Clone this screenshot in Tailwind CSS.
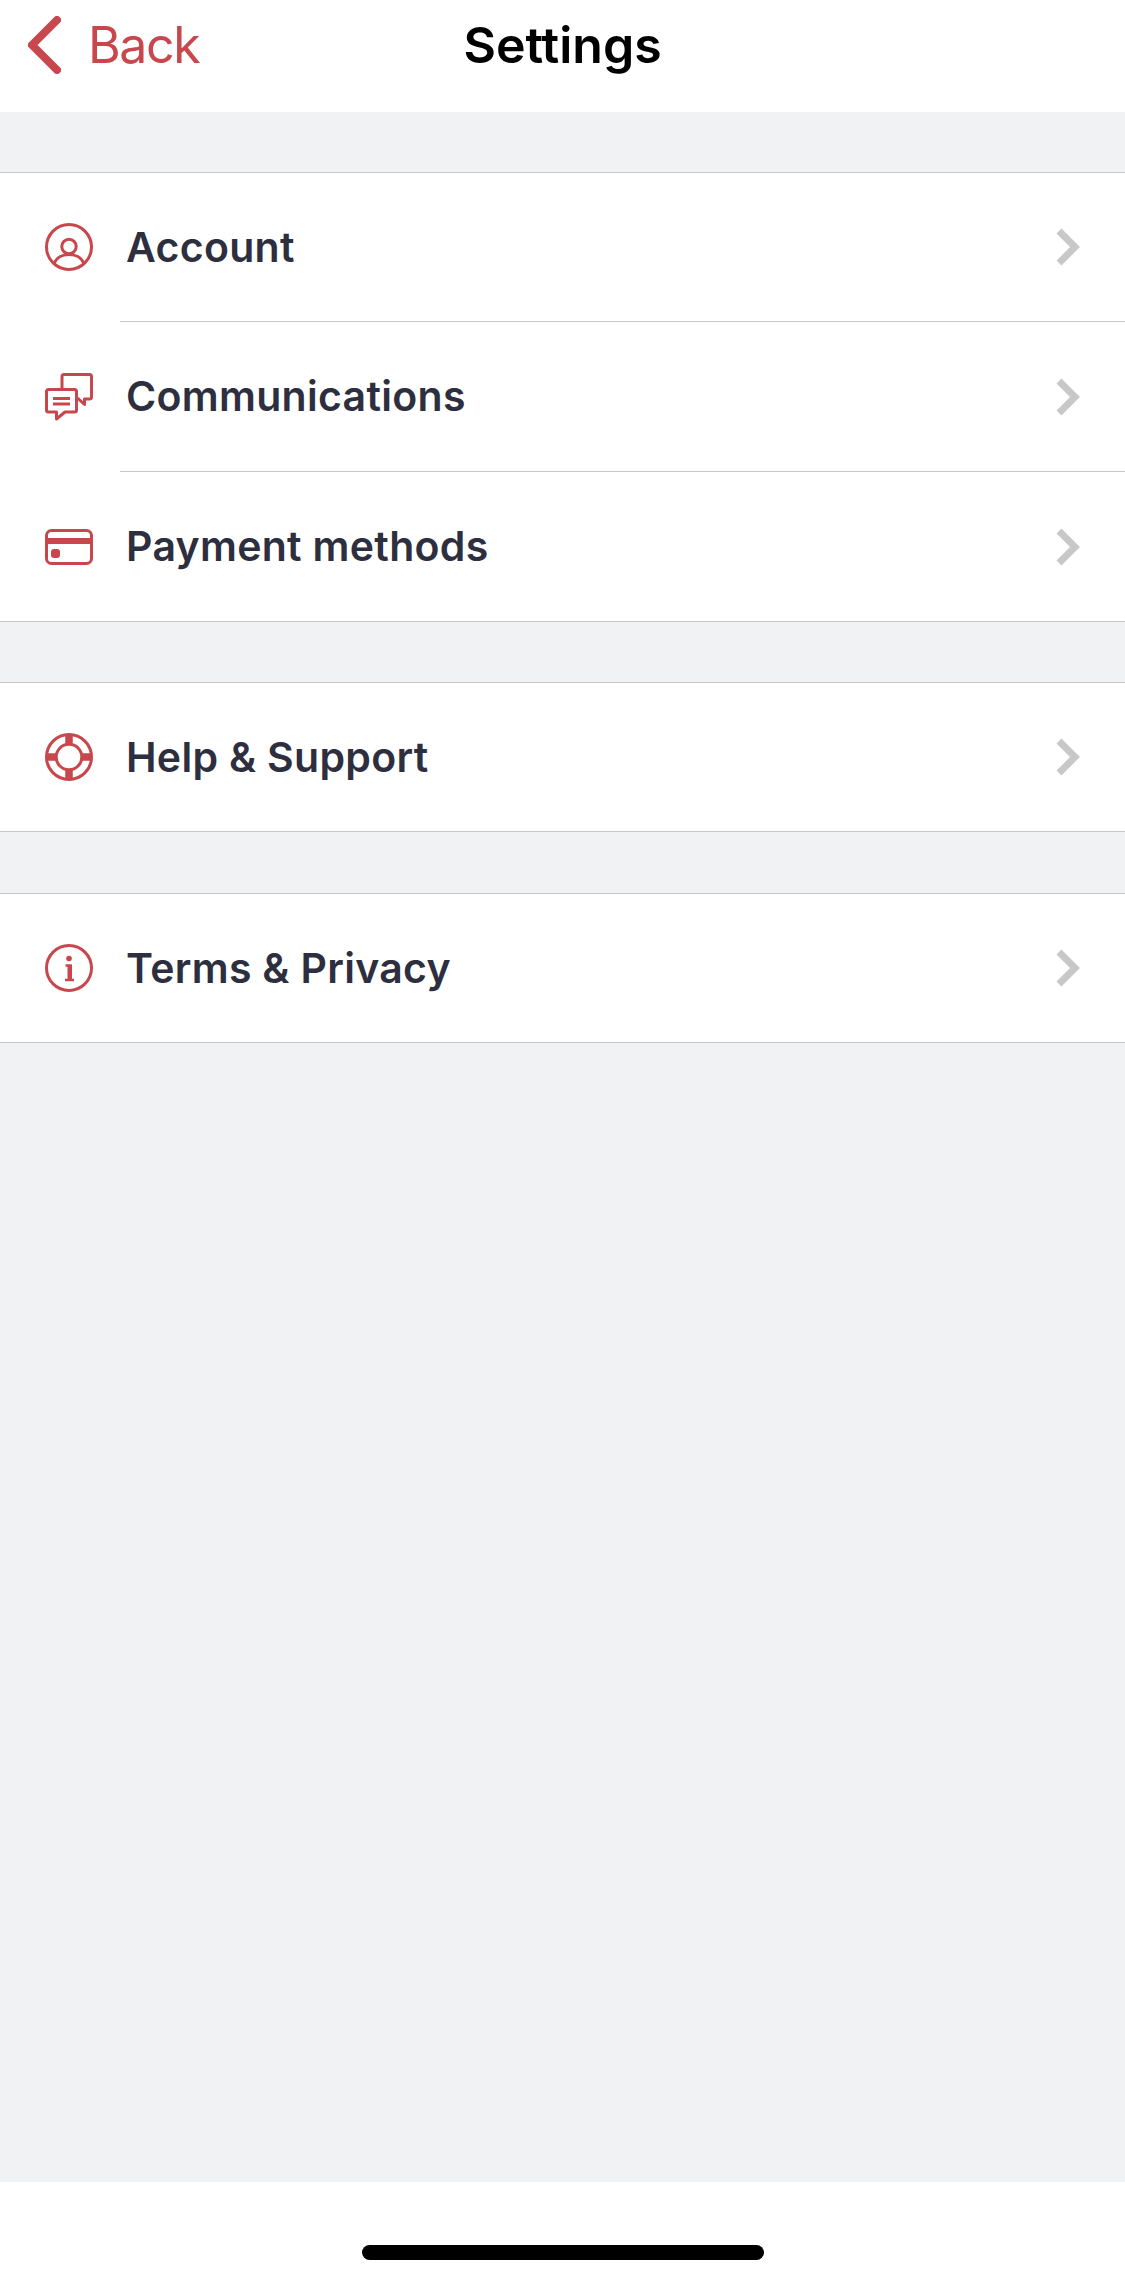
<!DOCTYPE html>
<html lang="en">

<head>
  <meta charset="UTF-8" />
  <meta name="viewport" content="width=device-width, initial-scale=1.0" />
  <title>Settings</title>
  <script src="https://cdn.jsdelivr.net/npm/@tailwindcss/browser@4"></script>
</head>

<body class="bg-[#f1f2f4] font-[Inter,sans-serif]">
  <div class="flex flex-col h-[2284px] w-[1125px] overflow-hidden">

    <!-- Navbar -->
    <header class="grid grid-cols-[1fr_auto_1fr] items-center h-[112px] pb-[22px] bg-white">
      <div class="flex items-center pl-[28px] gap-[27px] text-[#c8474d]">
        <svg width="33" height="58" viewBox="0 0 33 58" fill="none" stroke="currentColor" stroke-width="8" stroke-linecap="round" stroke-linejoin="round">
          <path d="M29 4 L4 29 L29 54" />
        </svg>
        <span class="text-[50px] leading-none tracking-[-1.4px]">Back</span>
      </div>
      <h1 class="text-[50px] leading-none font-semibold text-black">Settings</h1>
      <div></div>
    </header>

    <div class="h-[60px] shrink-0"></div>

    <!-- First group -->
    <section class="bg-white border-y border-[#c6c6c8]">
      <div class="flex items-center h-[148px] pl-[45px] pr-[44px]">
        <svg class="w-[48px] h-[48px] mr-[33px]" viewBox="0 0 48 48" fill="none" stroke="#c8474d" stroke-width="3">
          <circle cx="24" cy="24" r="22.5" />
          <circle cx="24" cy="23.5" r="7.2" />
          <path d="M9 41c2-6 8-9.5 15-9.5s13 3.5 15 9.5" />
        </svg>
        <span class="flex-1 text-[41px] leading-none font-semibold tracking-[0.3px] text-[#2d2f3e]">Account</span>
        <svg class="w-[25px] h-[38px]" viewBox="0 0 25 38" fill="none" stroke="#c8c8c8" stroke-width="7">
          <path d="M3 3 L19 19 L3 35" />
        </svg>
      </div>
      <div class="ml-[120px] h-px bg-[#c6c6c8]"></div>
      <div class="flex items-center h-[149px] pl-[45px] pr-[44px]">
        <svg class="w-[48px] h-[48px] mr-[33px]" viewBox="0 0 48 48" fill="none" stroke="#c8474d" stroke-width="3" stroke-linejoin="round">
          <path d="M17 15V3.5a2 2 0 0 1 2-2h25.5a2 2 0 0 1 2 2V24a2 2 0 0 1-2 2H39.5v5.5L32.5 25" />
          <path d="M3.5 16.5h26a2 2 0 0 1 2 2V37a2 2 0 0 1-2 2H20l-8.5 7V39h-8a2 2 0 0 1-2-2V18.5a2 2 0 0 1 2-2z" />
          <path d="M8 25.5h17M8 31h17" />
        </svg>
        <span class="flex-1 text-[41px] leading-none font-semibold tracking-[0.3px] text-[#2d2f3e]">Communications</span>
        <svg class="w-[25px] h-[38px]" viewBox="0 0 25 38" fill="none" stroke="#c8c8c8" stroke-width="7">
          <path d="M3 3 L19 19 L3 35" />
        </svg>
      </div>
      <div class="ml-[120px] h-px bg-[#c6c6c8]"></div>
      <div class="flex items-center h-[149px] pl-[45px] pr-[44px]">
        <svg class="w-[48px] h-[48px] mr-[33px]" viewBox="0 0 48 48" fill="none" stroke="#c8474d" stroke-width="3">
          <rect x="1.5" y="7.5" width="45" height="33" rx="5" />
          <rect x="1.5" y="15" width="45" height="6" fill="#c8474d" stroke="none" />
          <rect x="6" y="26" width="9" height="9" rx="3" fill="#c8474d" stroke="none" />
        </svg>
        <span class="flex-1 text-[41px] leading-none font-semibold tracking-[0.3px] text-[#2d2f3e]">Payment methods</span>
        <svg class="w-[25px] h-[38px]" viewBox="0 0 25 38" fill="none" stroke="#c8c8c8" stroke-width="7">
          <path d="M3 3 L19 19 L3 35" />
        </svg>
      </div>
    </section>

    <div class="h-[60px] shrink-0"></div>

    <!-- Help -->
    <section class="bg-white border-y border-[#c6c6c8]">
      <div class="flex items-center h-[148px] pl-[45px] pr-[44px]">
        <svg class="w-[48px] h-[48px] mr-[33px]" viewBox="0 0 48 48" fill="none" stroke="#c8474d" stroke-width="3">
          <circle cx="24" cy="24" r="22.5" />
          <circle cx="24" cy="24" r="12.8" />
          <path d="M24 2v10M24 36v10M2 24h10M36 24h10" stroke-width="7.5" />
        </svg>
        <span class="flex-1 text-[41px] leading-none font-semibold tracking-[0.3px] text-[#2d2f3e]">Help &amp; Support</span>
        <svg class="w-[25px] h-[38px]" viewBox="0 0 25 38" fill="none" stroke="#c8c8c8" stroke-width="7">
          <path d="M3 3 L19 19 L3 35" />
        </svg>
      </div>
    </section>

    <div class="h-[61px] shrink-0"></div>

    <!-- Terms -->
    <section class="bg-white border-y border-[#c6c6c8]">
      <div class="flex items-center h-[148px] pl-[45px] pr-[44px]">
        <svg class="w-[48px] h-[48px] mr-[33px]" viewBox="0 0 48 48" fill="none" stroke="#c8474d" stroke-width="3">
          <circle cx="24" cy="24" r="22.5" />
          <circle cx="24" cy="14.5" r="2.8" fill="#c8474d" stroke="none" />
          <path d="M20.5 21.5H25.5V35M20 36h9" stroke-width="2.6" />
          <rect x="22.5" y="21" width="4.5" height="15" fill="#c8474d" stroke="none" />
        </svg>
        <span class="flex-1 text-[41px] leading-none font-semibold tracking-[0.3px] text-[#2d2f3e]">Terms &amp; Privacy</span>
        <svg class="w-[25px] h-[38px]" viewBox="0 0 25 38" fill="none" stroke="#c8c8c8" stroke-width="7">
          <path d="M3 3 L19 19 L3 35" />
        </svg>
      </div>
    </section>

    <div class="flex-1"></div>

    <!-- Home indicator -->
    <footer class="flex justify-center h-[102px] shrink-0 pt-[63px] bg-white">
      <div class="w-[402px] h-[15px] rounded-full bg-black"></div>
    </footer>
  </div>
</body>

</html>
